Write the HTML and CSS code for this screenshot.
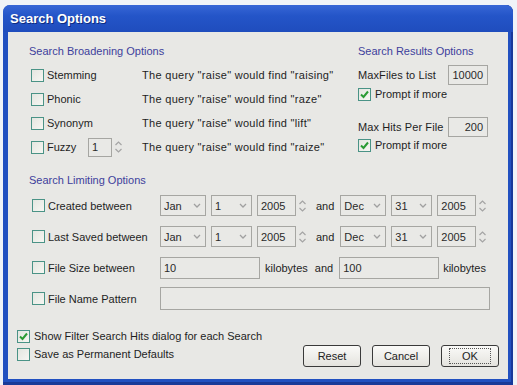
FILE: index.html
```html
<!DOCTYPE html>
<html lang="en">
<head>
  <meta charset="UTF-8" />
  <title>Search Options</title>
  <link rel="stylesheet" href="styles.css">
</head>
<body>

<div class="window">
  <div class="titlebar">Search Options</div>

  <div class="client">
    <!-- Broadening + results -->
    <div class="top">
      <div class="broaden">
        <div class="group-title">Search Broadening Options</div>
        <div class="brow">
          <label class="chk"><span class="box"></span>Stemming</label>
          <span class="desc">The query "raise" would find "raising"</span>
        </div>
        <div class="brow">
          <label class="chk"><span class="box"></span>Phonic</label>
          <span class="desc">The query "raise" would find "raze"</span>
        </div>
        <div class="brow">
          <label class="chk"><span class="box"></span>Synonym</label>
          <span class="desc">The query "raise" would find "lift"</span>
        </div>
        <div class="brow">
          <div class="fuzzy">
            <label class="chk"><span class="box"></span>Fuzzy</label>
            <span class="field spin">1</span>
            <svg class="arrows" width="9" height="16" viewBox="0 0 9 16"><path d="M1.5 6 L4.5 3 L7.5 6 M1.5 10 L4.5 13 L7.5 10" fill="none" stroke="#a4a4a4" stroke-width="1.2"/></svg>
          </div>
          <span class="desc">The query "raise" would find "raize"</span>
        </div>
      </div>

      <div class="results">
        <div class="group-title">Search Results Options</div>
        <div class="rrow">
          <span class="rlabel">MaxFiles to List</span>
          <span class="field num">10000</span>
        </div>
        <label class="chk rcheck"><span class="box on"><svg width="11" height="11" viewBox="0 0 11 11"><path d="M2 5.5 L4.5 8 L9 2.5" fill="none" stroke="#2b9b34" stroke-width="2"/></svg></span>Prompt if more</label>
        <div class="rrow second">
          <span class="rlabel">Max Hits Per File</span>
          <span class="field num">200</span>
        </div>
        <label class="chk rcheck last"><span class="box on"><svg width="11" height="11" viewBox="0 0 11 11"><path d="M2 5.5 L4.5 8 L9 2.5" fill="none" stroke="#2b9b34" stroke-width="2"/></svg></span>Prompt if more</label>
      </div>
    </div>

    <!-- Limiting -->
    <div class="limit">
      <div class="group-title small">Search Limiting Options</div>

      <div class="lrow">
        <label class="chk"><span class="box"></span>Created between</label>
        <span class="field combo month">Jan<svg width="8" height="5" viewBox="0 0 8 5"><path d="M1 1 L4 4 L7 1" fill="none" stroke="#a0a0a0" stroke-width="1.3"/></svg></span>
        <span class="field combo day">1<svg width="8" height="5" viewBox="0 0 8 5"><path d="M1 1 L4 4 L7 1" fill="none" stroke="#a0a0a0" stroke-width="1.3"/></svg></span>
        <span class="field year">2005</span>
        <svg class="arrows" width="9" height="16" viewBox="0 0 9 16"><path d="M1.5 6 L4.5 3 L7.5 6 M1.5 10 L4.5 13 L7.5 10" fill="none" stroke="#a4a4a4" stroke-width="1.2"/></svg>
        <span class="and">and</span>
        <span class="field combo month">Dec<svg width="8" height="5" viewBox="0 0 8 5"><path d="M1 1 L4 4 L7 1" fill="none" stroke="#a0a0a0" stroke-width="1.3"/></svg></span>
        <span class="field combo day">31<svg width="8" height="5" viewBox="0 0 8 5"><path d="M1 1 L4 4 L7 1" fill="none" stroke="#a0a0a0" stroke-width="1.3"/></svg></span>
        <span class="field year">2005</span>
        <svg class="arrows" width="9" height="16" viewBox="0 0 9 16"><path d="M1.5 6 L4.5 3 L7.5 6 M1.5 10 L4.5 13 L7.5 10" fill="none" stroke="#a4a4a4" stroke-width="1.2"/></svg>
      </div>

      <div class="lrow">
        <label class="chk"><span class="box"></span>Last Saved between</label>
        <span class="field combo month">Jan<svg width="8" height="5" viewBox="0 0 8 5"><path d="M1 1 L4 4 L7 1" fill="none" stroke="#a0a0a0" stroke-width="1.3"/></svg></span>
        <span class="field combo day">1<svg width="8" height="5" viewBox="0 0 8 5"><path d="M1 1 L4 4 L7 1" fill="none" stroke="#a0a0a0" stroke-width="1.3"/></svg></span>
        <span class="field year">2005</span>
        <svg class="arrows" width="9" height="16" viewBox="0 0 9 16"><path d="M1.5 6 L4.5 3 L7.5 6 M1.5 10 L4.5 13 L7.5 10" fill="none" stroke="#a4a4a4" stroke-width="1.2"/></svg>
        <span class="and">and</span>
        <span class="field combo month">Dec<svg width="8" height="5" viewBox="0 0 8 5"><path d="M1 1 L4 4 L7 1" fill="none" stroke="#a0a0a0" stroke-width="1.3"/></svg></span>
        <span class="field combo day">31<svg width="8" height="5" viewBox="0 0 8 5"><path d="M1 1 L4 4 L7 1" fill="none" stroke="#a0a0a0" stroke-width="1.3"/></svg></span>
        <span class="field year">2005</span>
        <svg class="arrows" width="9" height="16" viewBox="0 0 9 16"><path d="M1.5 6 L4.5 3 L7.5 6 M1.5 10 L4.5 13 L7.5 10" fill="none" stroke="#a4a4a4" stroke-width="1.2"/></svg>
      </div>

      <div class="lrow">
        <label class="chk"><span class="box"></span>File Size between</label>
        <span class="field size">10</span>
        <span class="unit">kilobytes</span>
        <span class="and">and</span>
        <span class="field size">100</span>
        <span class="unit">kilobytes</span>
      </div>

      <div class="lrow">
        <label class="chk"><span class="box"></span>File Name Pattern</label>
        <span class="field pattern"></span>
      </div>
    </div>

    <!-- Footer -->
    <div class="footer">
      <div class="footer-checks">
        <label class="chk fcheck"><span class="box on"><svg width="11" height="11" viewBox="0 0 11 11"><path d="M2 5.5 L4.5 8 L9 2.5" fill="none" stroke="#2b9b34" stroke-width="2"/></svg></span>Show Filter Search Hits dialog for each Search</label>
        <label class="chk fcheck"><span class="box"></span>Save as Permanent Defaults</label>
      </div>
      <div class="buttons">
        <button class="btn">Reset</button>
        <button class="btn">Cancel</button>
        <button class="btn default"><span class="focus">OK</span></button>
      </div>
    </div>
  </div>
</div>

</body>
</html>
```

FILE: styles.css
```css
body {
  margin: 0;
  background: #f0f3f8;
  font-family: "Liberation Sans", Arial, sans-serif;
  font-size: 11px;
  color: #1e1e1e;
}
.window {
  margin: 5px 4px 0 3px;
  height: 380px;
  padding: 0 5px 6px 5px;
  box-sizing: border-box;
  background: #2150c0;
  border-radius: 7px 7px 0 0;
  box-shadow: inset -2px 0 0 #17389a, inset 0 -3px 0 #1a3a98;
}
.titlebar {
  height: 27px;
  line-height: 28px;
  margin: 0 -5px;
  padding-left: 7px;
  color: #fff;
  font-size: 13px;
  font-weight: bold;
  text-shadow: 1px 1px 0 #0d2c80;
  background: linear-gradient(#3766d6, #2455c8 40%, #1f4dbd);
  border-radius: 7px 7px 0 0;
}
.client {
  height: 347px;
  padding: 7px 9px 0 9px;
  box-sizing: border-box;
  background: #e8e8e5;
}

/* shared controls */
.chk {
  display: flex;
  align-items: center;
  gap: 3px;
  white-space: nowrap;
}
.box {
  width: 13px;
  height: 13px;
  box-sizing: border-box;
  border: 1px solid #4a9386;
  background: linear-gradient(135deg, #e4e6e0, #f6f6f2);
  display: flex;
  align-items: center;
  justify-content: center;
  flex: none;
}
.field {
  height: 21px;
  box-sizing: border-box;
  border: 1px solid #a6a6a2;
  background: #e9e9e6;
  display: flex;
  align-items: center;
  padding: 0 3px;
  color: #2a2a2a;
  flex: none;
}
.arrows {
  flex: none;
}
.group-title {
  color: #3d3f9c;
  height: 24px;
  line-height: 24px;
}
.group-title.small {
  height: 20px;
  line-height: 20px;
}

/* broadening */
.top {
  display: flex;
  padding-left: 12px;
}
.broaden {
  width: 329px;
}
.results {
  flex: 1;
}
.brow {
  display: flex;
  align-items: center;
  height: 24px;
  padding-left: 2px;
}
.brow .chk {
  width: 111px;
}
.desc {
  letter-spacing: 0.3px;
}
.fuzzy {
  width: 111px;
  display: flex;
  align-items: center;
}
.fuzzy .chk {
  width: 57px;
}
.spin {
  width: 24px;
  height: 19px;
}
.fuzzy .arrows {
  margin-left: 2px;
}

/* results */
.rrow {
  display: flex;
  align-items: center;
  height: 24px;
}
.rrow.second {
  margin-top: 14px;
}
.rlabel {
  width: 90px;
  letter-spacing: 0.1px;
}
.num {
  width: 40px;
  height: 20px;
  justify-content: flex-end;
  padding-right: 4px;
}
.rcheck {
  height: 14px;
  gap: 4px;
}
.rcheck.last {
  margin-top: -1px;
}

/* limiting */
.limit {
  padding-left: 12px;
  margin-top: 11px;
}
.lrow {
  display: flex;
  align-items: center;
  height: 31px;
  padding-left: 3px;
}
.lrow .chk {
  width: 128px;
}
.combo {
  justify-content: space-between;
  padding-right: 4px;
}
.month {
  width: 46px;
  margin-right: 5px;
}
.day {
  width: 41px;
  margin-right: 5px;
}
.year {
  width: 39px;
}
.lrow .arrows {
  margin-left: 2px;
}
.and {
  margin: 0 6px 0 9px;
}
.size {
  width: 100px;
  height: 22px;
}
.unit {
  margin-left: 5px;
}
.size + .unit + .and {
  margin-left: 7px;
  margin-right: 6px;
}
.and + .size + .unit {
  margin-left: 4px;
}
.pattern {
  width: 330px;
  height: 23px;
}

/* footer */
.footer {
  display: flex;
  justify-content: space-between;
  margin-top: 13px;
}
.fcheck {
  height: 18px;
  gap: 4px;
}
.buttons {
  display: flex;
  gap: 11px;
  padding-top: 18px;
}
.btn {
  width: 58px;
  height: 22px;
  border: 1px solid #3a3a3a;
  border-radius: 3px;
  background: linear-gradient(#fafaf8, #e4e3de);
  font: inherit;
  color: #222;
  padding: 0;
}
.focus {
  outline: 1px dotted #555;
  padding: 1px 12px;
}
```
